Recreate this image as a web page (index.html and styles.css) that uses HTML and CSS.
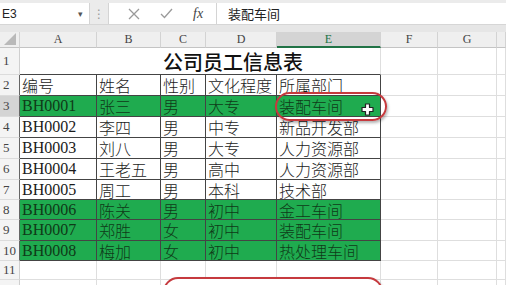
FILE: index.html
```html
<!DOCTYPE html>
<html lang="zh">
<head>
<meta charset="utf-8">
<link rel="stylesheet" href="styles.css">
</head>
<body>
<div class="app">
  <div class="fbar">
    <div class="namebox"><span class="ref">E3</span><span class="arrow">▾</span></div>
    <div class="dots">⋮</div>
    <div class="fbtns">
      <svg class="ic" width="12" height="12" viewBox="0 0 12 12"><path d="M1 1L11 11M11 1L1 11" stroke="#9a9a9a" stroke-width="1.3" fill="none"/></svg>
      <svg class="ic" width="13" height="11" viewBox="0 0 13 11"><path d="M1 6L4.5 9.5L12 1" stroke="#9a9a9a" stroke-width="1.3" fill="none"/></svg>
      <span class="fx">fx</span>
    </div>
    <div class="finput">装配车间</div>
  </div>
  <div class="gap"></div>
  <div class="sheet">
    <div class="h corner"><svg width="12" height="12" viewBox="0 0 12 12"><path d="M12 0V12H0Z" fill="#b9b9b9"/></svg></div>
    <div class="h">A</div><div class="h">B</div><div class="h">C</div><div class="h">D</div><div class="h sel">E</div><div class="h">F</div><div class="h">G</div><div class="h"></div>

    <div class="rh">1</div><div class="c title">公司员工信息表</div><div class="c"></div><div class="c"></div><div class="c"></div>

    <div class="rh t">2</div><div class="c d">编号</div><div class="c d">姓名</div><div class="c d">性别</div><div class="c d">文化程度</div><div class="c d">所属部门</div><div class="c"></div><div class="c"></div><div class="c"></div>

    <div class="rh t rsel">3</div><div class="c d g">BH0001</div><div class="c d g">张三</div><div class="c d g">男</div><div class="c d g">大专</div><div class="c d g">装配车间</div><div class="c"></div><div class="c"></div><div class="c"></div>

    <div class="rh t">4</div><div class="c d">BH0002</div><div class="c d">李四</div><div class="c d">男</div><div class="c d">中专</div><div class="c d">新品开发部</div><div class="c"></div><div class="c"></div><div class="c"></div>

    <div class="rh t">5</div><div class="c d">BH0003</div><div class="c d">刘八</div><div class="c d">男</div><div class="c d">大专</div><div class="c d">人力资源部</div><div class="c"></div><div class="c"></div><div class="c"></div>

    <div class="rh t">6</div><div class="c d">BH0004</div><div class="c d">王老五</div><div class="c d">男</div><div class="c d">高中</div><div class="c d">人力资源部</div><div class="c"></div><div class="c"></div><div class="c"></div>

    <div class="rh t">7</div><div class="c d">BH0005</div><div class="c d">周工</div><div class="c d">男</div><div class="c d">本科</div><div class="c d">技术部</div><div class="c"></div><div class="c"></div><div class="c"></div>

    <div class="rh t">8</div><div class="c d g">BH0006</div><div class="c d g">陈关</div><div class="c d g">男</div><div class="c d g">初中</div><div class="c d g">金工车间</div><div class="c"></div><div class="c"></div><div class="c"></div>

    <div class="rh t">9</div><div class="c d g">BH0007</div><div class="c d g">郑胜</div><div class="c d g">女</div><div class="c d g">初中</div><div class="c d g">装配车间</div><div class="c"></div><div class="c"></div><div class="c"></div>

    <div class="rh t">10</div><div class="c d g">BH0008</div><div class="c d g">梅加</div><div class="c d g">女</div><div class="c d g">初中</div><div class="c d g">热处理车间</div><div class="c"></div><div class="c"></div><div class="c"></div>

    <div class="rh">11</div><div class="c"></div><div class="c"></div><div class="c"></div><div class="c"></div><div class="c"></div><div class="c"></div><div class="c"></div><div class="c"></div>

    <div class="rh"></div><div class="c"></div><div class="c"></div><div class="c"></div><div class="c"></div><div class="c"></div><div class="c"></div><div class="c"></div><div class="c"></div>
  </div>

  <div class="mark mark-e3"></div>
  <svg class="cursor" width="13" height="13" viewBox="0 0 13 13"><path d="M4.5 1H8.5V4.5H12V8.5H8.5V12H4.5V8.5H1V4.5H4.5Z" fill="#fff" stroke="#222" stroke-width="1.2" stroke-linejoin="round"/></svg>
  <div class="mark mark-bottom"><span>本汇总量</span></div>
</div>
</body>
</html>
```

FILE: styles.css
```css
* { box-sizing: border-box; }
html, body { margin: 0; padding: 0; }
body {
  width: 506px;
  height: 285px;
  overflow: hidden;
  background: #fff;
  font-family: "Liberation Serif", "Noto Sans CJK SC", serif;
}
.app {
  position: relative;
  width: 506px;
  height: 285px;
  overflow: hidden;
}
.fbar {
  height: 25px;
  padding-top: 3px;
  background: #ebebeb;
  display: flex;
  border-bottom: 1px solid #d6d6d6;
}
.namebox {
  width: 90px;
  background: #fff;
  border-right: 1px solid #d4d4d4;
  display: flex;
  align-items: center;
  justify-content: space-between;
  padding: 0 6px 0 2px;
  font-family: "Liberation Sans", "Noto Sans CJK SC", sans-serif;
  font-size: 12px;
  color: #222;
}
.namebox .arrow { font-size: 9px; color: #555; }
.dots {
  width: 18px;
  display: flex;
  align-items: center;
  justify-content: center;
  color: #999;
  font-size: 12px;
  font-family: "DejaVu Sans", sans-serif;
}
.fbtns {
  width: 109px;
  background: #fff;
  border-left: 1px solid #d4d4d4;
  border-right: 1px solid #d4d4d4;
  display: flex;
  align-items: center;
  padding-left: 19px;
  gap: 20px;
}
.fx {
  font-family: "Liberation Serif", serif;
  font-style: italic;
  font-size: 14px;
  color: #444;
}
.finput {
  flex: 1;
  background: #fff;
  display: flex;
  align-items: center;
  padding-left: 11px;
  font-family: "Noto Sans CJK SC", sans-serif;
  font-size: 13px;
  color: #222;
}
.gap {
  height: 7px;
  background: #e6e6e6;
}
.sheet {
  display: grid;
  grid-template-columns: 20px 77px 64px 45px 71px 104px 57px 59px 9px;
  grid-template-rows: 16px 27px 21px 21px 21px 21px 21px 20px 20px 21px 20px 19px 20px;
}
.h {
  background: #efefef;
  border-right: 1px solid #d3d3d3;
  border-bottom: 1px solid #c4c4c4;
  display: flex;
  align-items: center;
  justify-content: center;
  font-size: 12px;
  color: #444;
}
.h.corner {
  justify-content: flex-end;
  align-items: flex-end;
  padding: 0 3px 2px 0;
}
.h.sel {
  background: #d4d4d4;
  color: #217346;
  border-bottom: 2px solid #217346;
}
.rh {
  background: #f4f4f4;
  border-right: 1px solid #cfcfcf;
  border-bottom: 1px solid #dcdcdc;
  display: flex;
  align-items: center;
  padding-left: 3px;
  font-size: 13px;
  color: #444;
}
.rh.t { border-right-color: #666; }
.rh.rsel { background: #d4d4d4; }
.c {
  border-right: 1px solid #dedede;
  border-bottom: 1px solid #dedede;
  display: flex;
  align-items: center;
  padding-left: 2px;
  font-size: 16px;
  font-weight: 300;
  color: #1b1b1b;
  white-space: nowrap;
  overflow: hidden;
}
.c.title {
  grid-column: span 5;
  border-bottom: 1px solid #444;
  padding-left: 143px;
  padding-top: 1px;
  font-family: "Noto Sans CJK SC", sans-serif;
  font-size: 20px;
  font-weight: 500;
  color: #111;
}
.c.d {
  border-right: 1px solid #444;
  border-bottom: 1px solid #444;
}
.c.g {
  background: #1fab4f;
  color: #0f3a18;
}
.mark {
  position: absolute;
  border: 2px solid #c63a3e;
  border-radius: 15px;
  box-shadow: 1px 2px 3px rgba(0, 0, 0, 0.3);
}
.mark-e3 {
  left: 275px;
  top: 92px;
  width: 112px;
  height: 29px;
}
.cursor {
  position: absolute;
  left: 361px;
  top: 103px;
}
.mark-bottom {
  left: 163px;
  top: 277px;
  width: 220px;
  height: 30px;
  padding: 2px 0 0 8px;
  font-family: "Noto Sans CJK SC", sans-serif;
  font-size: 16px;
  color: #222;
  background: #fff;
}
```
